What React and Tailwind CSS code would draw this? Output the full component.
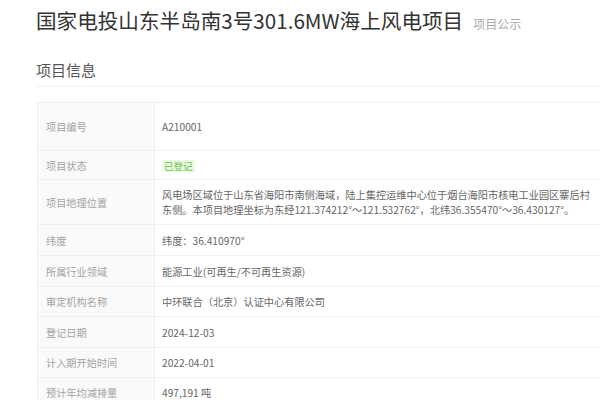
const rows = [
  { label: "项目编号", value: "A210001", h: "h-[48px]" },
  { label: "项目状态", badge: "已登记", h: "h-[29px]" },
  {
    label: "项目地理位置",
    lines: [
      "风电场区域位于山东省海阳市南侧海域，陆上集控运维中心位于烟台海阳市核电工业园区寨后村",
      "东侧。本项目地理坐标为东经121.374212°～121.532762°，北纬36.355470°～36.430127°。",
    ],
    h: "h-[45px]",
  },
  { label: "纬度", value: "纬度：36.410970°", h: "h-[31px]" },
  { label: "所属行业领域", value: "能源工业(可再生/不可再生资源)", h: "h-[31px]" },
  { label: "审定机构名称", value: "中环联合（北京）认证中心有限公司", h: "h-[30px]" },
  { label: "登记日期", value: "2024-12-03", h: "h-[31px]" },
  { label: "计入期开始时间", value: "2022-04-01", h: "h-[30px]" },
  { label: "预计年均减排量", value: "497,191 吨", h: "h-[30px]" },
];

export default function App() {
  return (
    <div className="h-[400px] w-[600px] overflow-hidden bg-white pl-[36px] pt-[6px] font-['Noto_Sans_CJK_SC',sans-serif]">
      <div className="flex items-baseline gap-[10px]">
        <h1 className="text-[20.6px] leading-[28px] text-[#333]">
          国家电投山东半岛南3号301.6MW海上风电项目
        </h1>
        <span className="text-[12px] text-[#aaa]">项目公示</span>
      </div>

      <div className="mt-[26px] border-b border-[#f0f0f0] pb-[6px]">
        <p className="text-[15px] leading-[20px] text-[#555]">项目信息</p>
      </div>

      <table className="ml-px mt-[15px] w-[620px] border-collapse text-[10.2px] leading-[15px]">
        <tbody>
          {rows.map((r) => (
            <tr key={r.label} className={r.h}>
              <td className="w-[117px] border border-[#f0f0f0] bg-[#fafafa] px-[8px] align-middle text-[#a3a3a3]">
                {r.label}
              </td>
              <td className="border border-[#f0f0f0] px-[7px] align-middle text-[#666]">
                {r.badge && (
                  <span className="inline-block rounded-[2px] bg-[#eaf7e2] px-[2px] text-[9.5px] leading-[12px] text-[#6cc24a]">
                    {r.badge}
                  </span>
                )}
                {r.value}
                {r.lines && (
                  <>
                    {r.lines[0]}
                    <br />
                    {r.lines[1]}
                  </>
                )}
              </td>
            </tr>
          ))}
        </tbody>
      </table>
    </div>
  );
}
